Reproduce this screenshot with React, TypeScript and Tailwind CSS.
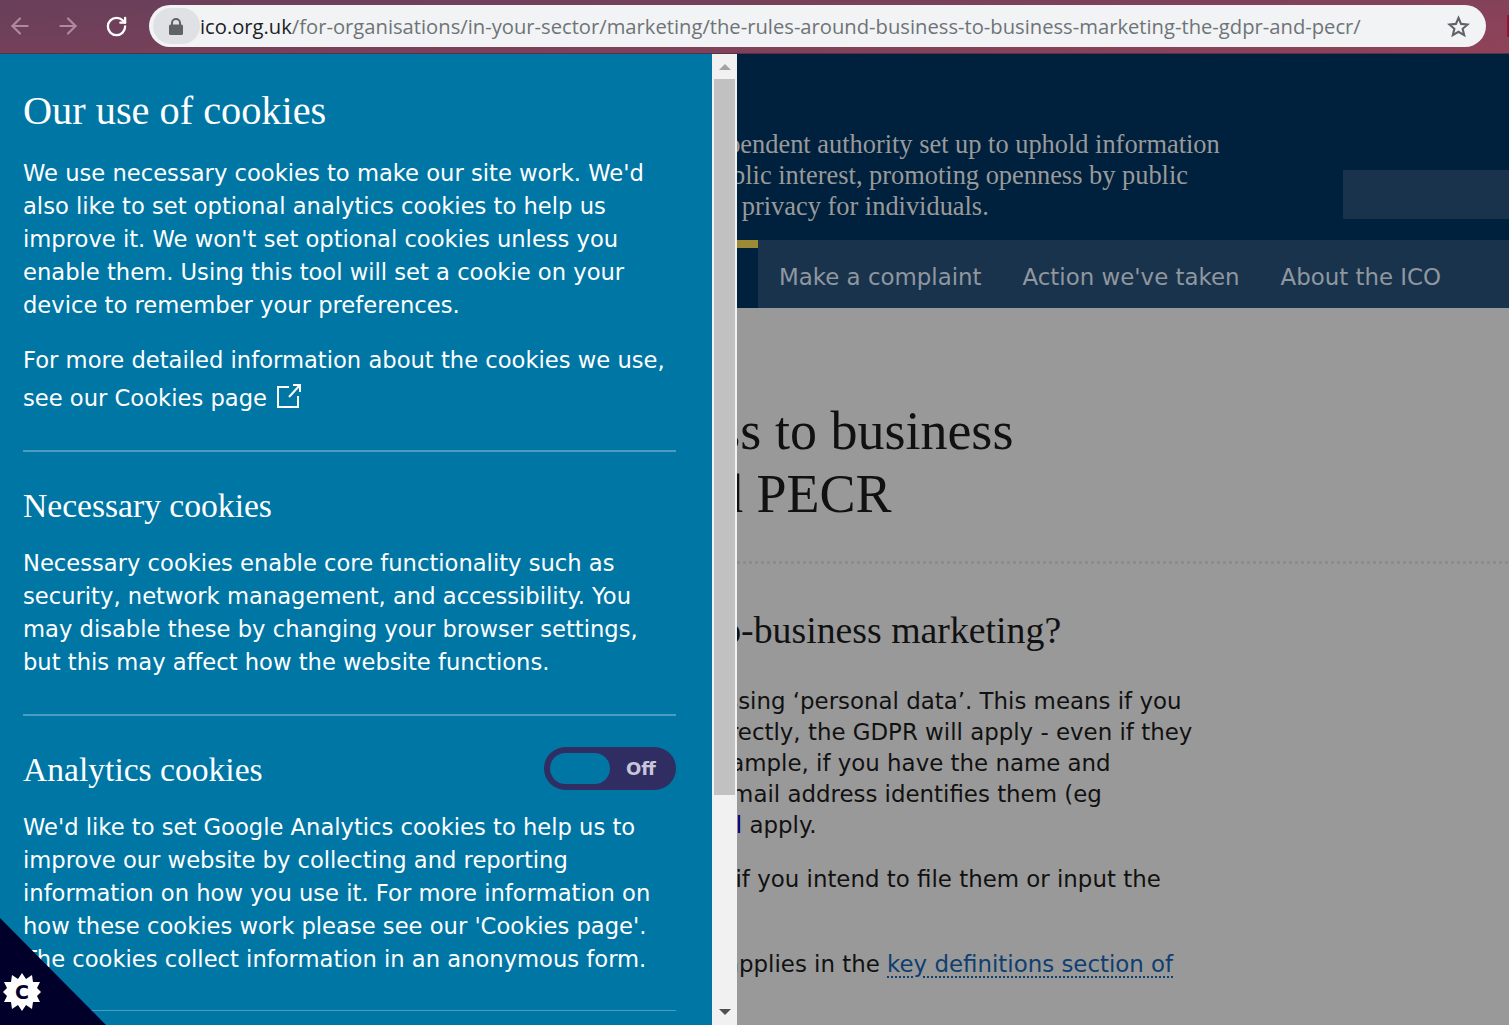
import { ArrowLeft, ArrowRight, RotateCw } from 'lucide-react';

const BODY = "font-['DejaVu_Sans',sans-serif]";
const SERIF = "font-['Liberation_Serif',serif]";

function BrowserBar() {
  return (
    <div className="h-[54px] flex items-center bg-[linear-gradient(175deg,#683f5a,#8f4359)] border-b border-[#5a3048] pb-[1px] shrink-0">
      <div className="w-[149px] flex items-center pl-[7px] gap-[22px] shrink-0">
        <ArrowLeft size={26} strokeWidth={2} className="text-[#b08a9c]" />
        <ArrowRight size={26} strokeWidth={2} className="text-[#b08a9c]" />
        <RotateCw size={23} strokeWidth={2.4} className="text-white ml-[2px]" />
      </div>
      <div className="w-[1337px] h-[42px] rounded-full bg-[#f1f3f4] flex items-center pl-[4px] pr-[16px]">
        <div className="w-[47px] h-[36px] rounded-full bg-[#dfe1e5] flex items-center justify-center pr-[1px] shrink-0">
          <svg width={14} height={17} viewBox="0 0 14 17" fill="#5f6368">
            <path d="M2 6.5V5a5 5 0 0 1 10 0v1.5h.5A1.5 1.5 0 0 1 14 8v7.5a1.5 1.5 0 0 1-1.5 1.5h-11A1.5 1.5 0 0 1 0 15.500V8a1.5 1.500 0 0 1 1.500-1.500zM4 6.500h6V5a3 3 0 0 0-6 0z" />
          </svg>
        </div>
        <div className="flex-1 font-['Open_Sans',sans-serif] text-[20.2px] whitespace-nowrap pt-[1px]">
          <span className="text-[#202124]">ico.org.uk</span>
          <span className="text-[#6f7378]">/for-organisations/in-your-sector/marketing/the-rules-around-business-to-business-marketing-the-gdpr-and-pecr/</span>
        </div>
        <svg width={23} height={23} viewBox="0 0 24 24" fill="none" stroke="#5f6368" strokeWidth={2.2} strokeLinejoin="miter">
          <polygon points="12,3 14.700,9.300 21.500,9.900 16.300,14.400 17.900,21 12,17.500 6.100,21 7.700,14.400 2.500,9.900 9.300,9.300" />
        </svg>
      </div>
      <div className="flex-1 flex justify-end">
        <div className="w-[2px] h-[22px] bg-[#a00f30] rounded-l-[1px]" />
      </div>
    </div>
  );
}

function CookiePanel() {
  const pCls = `${BODY} text-[22.65px] leading-[33px] text-white`;
  const hCls = `${SERIF} text-white`;
  return (
    <div className="w-[712px] shrink-0 bg-[#0076a5] overflow-hidden px-[23px] pr-[36px] pt-[34px] relative">
      <h1 className={`${hCls} text-[40.3px] leading-[46px]`}>Our use of cookies</h1>
      <p className={`${pCls} mt-[23px]`}>
        We use necessary cookies to make our site work. We'd also like to set optional analytics cookies to help us improve it. We won't set optional cookies unless you enable them. Using this tool will set a cookie on your device to remember your preferences.
      </p>
      <p className={`${pCls} mt-[19px] leading-[38px]`}>
        For more detailed information about the cookies we use, see our Cookies page
        <svg className="inline-block ml-[9px] align-[-3px]" width={26} height={26} viewBox="0 0 26 26" fill="none" stroke="#fff" strokeWidth={2}>
          <path d="M13 4H2v20h20V13M13 14 24 2M17 2h7v7" />
        </svg>
      </p>
      <div className="h-[2px] bg-[#4a9dc0] mt-[33px]" />
      <h2 className={`${hCls} text-[33.6px] leading-[40px] mt-[34px]`}>Necessary cookies</h2>
      <p className={`${pCls} mt-[21px]`}>
        Necessary cookies enable core functionality such as security, network management, and accessibility. You may disable these by changing your browser settings, but this may affect how the website functions.
      </p>
      <div className="h-[2px] bg-[#4a9dc0] mt-[35px]" />
      <div className="flex items-center justify-between mt-[31px]">
        <h2 className={`${hCls} text-[33.6px] leading-[40px] pt-[2px]`}>Analytics cookies</h2>
        <div className="w-[132px] h-[43px] rounded-full bg-[#2f2d62] flex items-center pl-[6px] shrink-0">
          <div className="w-[60px] h-[31px] rounded-full bg-[#0076a5]" />
          <span className={`${BODY} font-bold text-[18px] text-[#c9c5da] ml-[16px]`}>Off</span>
        </div>
      </div>
      <p className={`${pCls} mt-[21px]`}>
        We'd like to set Google Analytics cookies to help us to improve our website by collecting and reporting information on how you use it. For more information on how these cookies work please see our 'Cookies page'. The cookies collect information in an anonymous form.
      </p>
      <div className="h-[1px] bg-[#4a9dc0] mt-[34px]" />
    </div>
  );
}

function Scrollbar() {
  return (
    <div className="w-[25px] shrink-0 bg-[#f1f1f1] flex flex-col items-center">
      <div className="h-[25px] flex items-center justify-center">
        <div className="w-0 h-0 border-x-[6px] border-x-transparent border-b-[6px] border-b-[#a3a3a3]" />
      </div>
      <div className="w-[21px] h-[716px] bg-[#c1c1c1]" />
      <div className="flex-1" />
      <div className="h-[26px] flex items-center justify-center">
        <div className="w-0 h-0 border-x-[6px] border-x-transparent border-t-[6px] border-t-[#505050]" />
      </div>
    </div>
  );
}

function PageBehind() {
  const line = `${BODY} whitespace-nowrap text-[#111] text-[22.9px] leading-[31px]`;
  return (
    <div className="flex-1 min-w-0 overflow-hidden bg-[#999999]">
      <div className="h-[186px] bg-[#00213d] flex items-end">
        <div className={`${SERIF} flex-1 text-[26.4px] leading-[31px] text-[#9a9a9a] whitespace-nowrap pb-[18px] -ml-[218px]`}>
          <div>The ICO is the independent authority set up to uphold information</div>
          <div className="ml-[54px]">rights in the public interest, promoting openness by public</div>
          <div className="ml-[52px]">bodies and data privacy for individuals.</div>
        </div>
        <div className="w-[166px] h-[49px] bg-[#1a334d] mb-[21px] shrink-0" />
      </div>
      <div className="h-[68px] bg-[#00213d] flex">
        <div className="w-[21px] shrink-0">
          <div className="h-[8px] bg-[#9c8a35]" />
        </div>
        <div className={`${BODY} flex-1 bg-[#1a334d] text-[#8f979f] text-[22.9px] flex items-center pl-[21px] pt-[6px] gap-[41px] whitespace-nowrap`}>
          <span>Make a complaint</span>
          <span>Action we've taken</span>
          <span>About the ICO</span>
        </div>
      </div>
      <div className="pt-[92px]">
        <div className={`${SERIF} text-[54px] leading-[63px] text-[#111] whitespace-nowrap`}>
          <div className="-ml-[538px]">The rules around business to business</div>
          <div className="-ml-[555px]">marketing, the GDPR and PECR</div>
        </div>
        <div className="h-[3px] mt-[35px] bg-[repeating-linear-gradient(90deg,#8c8c8c_0,#8c8c8c_3px,transparent_3px,transparent_6px)]" />
        <div className={`${SERIF} text-[37.8px] leading-[44px] text-[#111] whitespace-nowrap mt-[44px] -ml-[292px]`}>What is business-to-business marketing?</div>
        <div className="mt-[34px]">
          <div className={`${line} -ml-[159px]`}>means processing ‘personal data’. This means if you</div>
          <div className={`${line} -ml-[29px]`}>directly, the GDPR will apply - even if they</div>
          <div className={`${line} -ml-[34px]`}>example, if you have the name and</div>
          <div className={`${line} -ml-[20px]`}>email address identifies them (eg</div>
          <div className={`${line} -ml-[105px]`}><span className="text-[#00007a]">GDPR will</span> <span>apply.</span></div>
          <div className={`${line} mt-[23px] -ml-[65px]`}>even if you intend to file them or input the</div>
          <div className={`${line} mt-[54px] -ml-[12px]`}>applies in the <span className="text-[#0f3e70] underline decoration-dotted decoration-2 underline-offset-[4px]">key definitions section of</span></div>
        </div>
      </div>
    </div>
  );
}

export default function App() {
  return (
    <div className="w-[1509px] h-[1025px] overflow-hidden flex flex-col relative">
      <BrowserBar />
      <div className="flex flex-1 min-h-0">
        <CookiePanel />
        <Scrollbar />
        <PageBehind />
      </div>
      <div className="absolute left-0 bottom-0 w-[106px] h-[107px] bg-[#00002a] [clip-path:polygon(0_0,100%_100%,0_100%)]" />
      <div className="absolute left-[3px] bottom-[14px] w-[38px] h-[38px] flex items-center justify-center">
        <svg width={38} height={38} viewBox="0 0 38 38" className="absolute inset-0">
          <polygon fill="#fff" points="19,0 23,6 29,2 30,9 37,9 34,15 38,19 34,23 37,29 30,29 29,36 23,32 19,38 15,32 9,36 8,29 1,29 4,23 0,19 4,15 1,9 8,9 9,2 15,6" />
        </svg>
        <span className={`relative ${BODY} font-bold text-[19px] text-[#00002a]`}>C</span>
      </div>
    </div>
  );
}
